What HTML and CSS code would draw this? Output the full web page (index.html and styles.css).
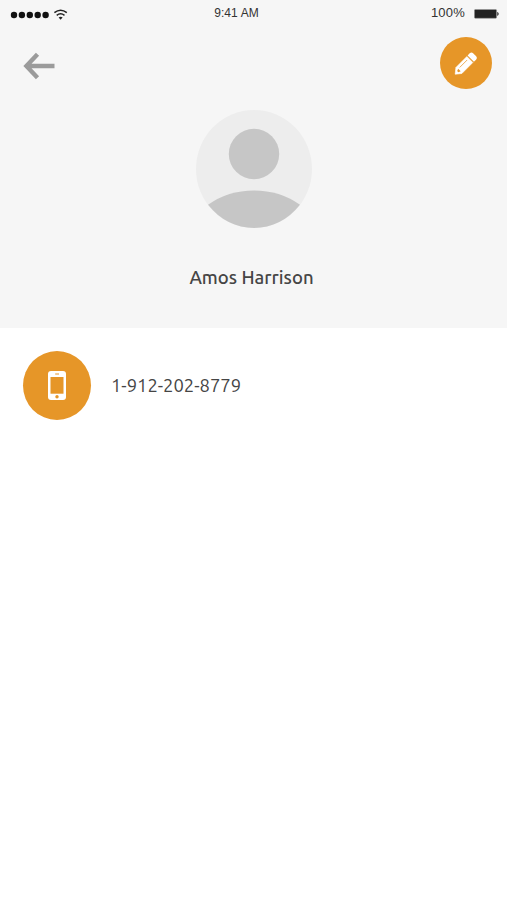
FILE: index.html
```html
<!DOCTYPE html>
<html lang="en">
<head>
<meta charset="utf-8">
<meta name="viewport" content="width=device-width, initial-scale=1">
<title>Contact</title>
<link rel="stylesheet" href="styles.css">
</head>
<body>
<header class="profile">
  <div class="status">
    <svg class="signal" viewBox="0 0 60 14" aria-hidden="true">
      <g fill="#111"><circle cx="4" cy="8" r="3.2"/><circle cx="11.9" cy="8" r="3.2"/><circle cx="19.8" cy="8" r="3.2"/><circle cx="27.7" cy="8" r="3.2"/><circle cx="35.6" cy="8" r="3.2"/></g>
      <g fill="none" stroke="#222" stroke-width="1.5"><path d="M44.4 5.7Q50.6 .9 56.8 5.7"/><path d="M46.7 8.3Q50.6 5.2 54.5 8.3"/></g>
      <path d="M48.6 10.5Q50.6 9 52.6 10.5L50.6 12.8Z" fill="#222"/>
    </svg>
    <span class="time">9:41 AM</span>
    <div class="power">
      <span class="percent">100%</span>
      <svg class="battery" viewBox="0 0 26 10" aria-hidden="true">
        <rect x=".4" y=".5" width="22.2" height="8.8" rx="1" fill="#222" stroke="#999" stroke-width=".6"/>
        <path d="M23.6 3.2Q25.4 4.9 23.6 6.6Z" fill="#222" stroke="#222" stroke-width=".5"/>
      </svg>
    </div>
  </div>
  <nav class="nav">
    <svg class="back" viewBox="0 0 32 28" role="img" aria-label="Back">
      <path d="M14.5 2.2L3.4 14L14.5 25.8M3.6 14H31.5" fill="none" stroke="#9b9b9b" stroke-width="4.4"/>
    </svg>
    <div class="edit">
      <svg class="pencil" viewBox="0 0 26 26" role="img" aria-label="Edit">
        <g transform="translate(2.2 24.2) rotate(-45)">
          <path d="M0 0L5.2-4.2H20.7V4.2H5.2Z" fill="#fff" stroke="#fff" stroke-width=".6" stroke-linejoin="round"/>
          <path d="M22-4.5H25Q27.5-4.5 27.5-2.2V2.2Q27.5 4.5 25 4.5H22Z" fill="#fff"/>
          <path d="M8-1.6H18.5" stroke="#e69628" stroke-width=".7"/>
          <path d="M3.6-.8L6-1.8V1.8L3.6.8Z" fill="#e69628"/>
        </g>
      </svg>
    </div>
  </nav>
  <svg class="avatar" viewBox="0 0 116 118" aria-hidden="true">
    <ellipse cx="58" cy="59" rx="58" ry="59" fill="#ededed"/>
    <circle cx="58" cy="44" r="25.2" fill="#c6c6c6"/>
    <path d="M12 94.8Q32 80.5 58 80.5T104 94.8C92 110 76 118 58 118S24 110 12 94.8Z" fill="#c6c6c6"/>
  </svg>
  <h1 class="name">Amos Harrison</h1>
</header>
<main class="details">
  <div class="phone-icon">
    <svg class="phone" viewBox="0 0 18 30" aria-hidden="true">
      <rect width="18" height="29" rx="3" fill="#fff"/>
      <rect x="2.5" y="6" width="13" height="16.7" fill="#e69628"/>
      <path d="M7.2 3H11" stroke="#e69628" stroke-width="1"/>
      <circle cx="9" cy="25.8" r="1.7" fill="#e69628"/>
    </svg>
  </div>
  <span class="number">1-912-202-8779</span>
</main>
</body>
</html>
```
FILE: styles.css
```css
* { box-sizing: border-box; }
body {
  margin: 0;
  min-height: 900px;
  background: #fff;
  color: #454545;
  font-family: Ubuntu, "Noto Sans", sans-serif;
}
svg { display: block; flex: none; }
.profile {
  height: 328px;
  background: #f6f6f6;
  display: flex;
  flex-direction: column;
  align-items: center;
}
.status {
  width: 100%;
  height: 37px;
  padding: 0 7px 0 10px;
  display: grid;
  grid-template-columns: 1fr auto 1fr;
  align-items: start;
  font-family: "Liberation Sans", Arial, sans-serif;
  color: #333;
}
.signal { width: 60px; height: 14px; margin-top: 7px; }
.time { font-size: 12px; line-height: 14px; margin: 6px 37px 0 0; letter-spacing: .1px; }
.power { display: flex; justify-content: flex-end; gap: 9px; }
.percent { font-size: 13px; line-height: 14px; margin-top: 6px; letter-spacing: .2px; }
.battery { width: 26px; height: 10px; margin-top: 9px; }
.nav {
  width: 100%;
  height: 73px;
  padding: 0 15px 0 23px;
  display: flex;
  justify-content: space-between;
}
.back { width: 32px; height: 28px; margin-top: 15px; }
.edit {
  width: 52px;
  height: 52px;
  border-radius: 50%;
  background: #e69628;
  display: flex;
  align-items: center;
  justify-content: center;
}
.pencil { width: 26px; height: 26px; }
.avatar { width: 116px; height: 118px; }
.name {
  margin: 36px 4px 0 0;
  font-size: 18.5px;
  line-height: 26px;
  font-weight: 500;
}
.details {
  display: flex;
  align-items: center;
  gap: 20px;
  padding: 23px;
}
.phone-icon {
  width: 68px;
  height: 69px;
  border-radius: 50%;
  background: #e69628;
  display: flex;
  align-items: center;
  justify-content: center;
}
.phone { width: 18px; height: 30px; }
.number { font-size: 18.4px; line-height: 24px; margin-bottom: 2px; }
```
